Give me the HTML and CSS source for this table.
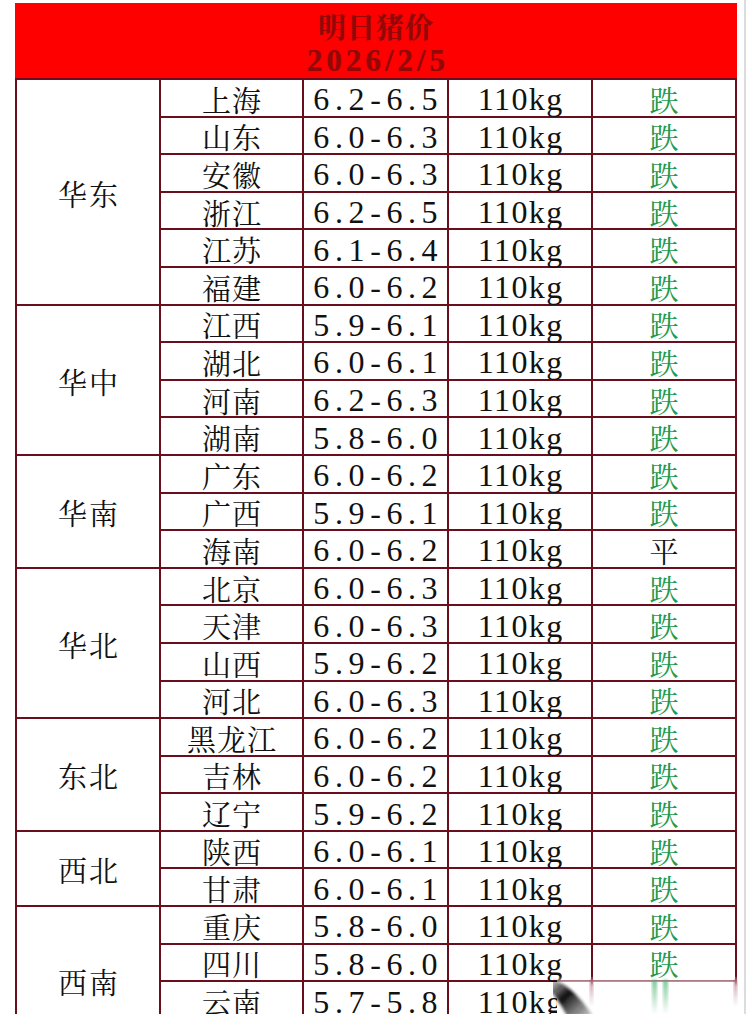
FILE: index.html
```html
<!DOCTYPE html>
<html lang="zh-CN">
<head>
<meta charset="utf-8">
<title>明日猪价</title>
<link rel="stylesheet" href="styles.css">
</head>
<body>
<div class="page">
  <div class="sheet">
    <div class="head">
      <div class="title">明日猪价</div>
      <div class="date">2026/2/5</div>
    </div>
    <div class="grid">
      <div class="region" style="grid-row: span 6">华东</div>
      <div class="prov">上海</div><div class="range">6.2-6.5</div><div class="wt">110kg</div><div class="trend down">跌</div>
      <div class="prov">山东</div><div class="range">6.0-6.3</div><div class="wt">110kg</div><div class="trend down">跌</div>
      <div class="prov">安徽</div><div class="range">6.0-6.3</div><div class="wt">110kg</div><div class="trend down">跌</div>
      <div class="prov">浙江</div><div class="range">6.2-6.5</div><div class="wt">110kg</div><div class="trend down">跌</div>
      <div class="prov">江苏</div><div class="range">6.1-6.4</div><div class="wt">110kg</div><div class="trend down">跌</div>
      <div class="prov">福建</div><div class="range">6.0-6.2</div><div class="wt">110kg</div><div class="trend down">跌</div>

      <div class="region" style="grid-row: span 4">华中</div>
      <div class="prov">江西</div><div class="range">5.9-6.1</div><div class="wt">110kg</div><div class="trend down">跌</div>
      <div class="prov">湖北</div><div class="range">6.0-6.1</div><div class="wt">110kg</div><div class="trend down">跌</div>
      <div class="prov">河南</div><div class="range">6.2-6.3</div><div class="wt">110kg</div><div class="trend down">跌</div>
      <div class="prov">湖南</div><div class="range">5.8-6.0</div><div class="wt">110kg</div><div class="trend down">跌</div>

      <div class="region" style="grid-row: span 3">华南</div>
      <div class="prov">广东</div><div class="range">6.0-6.2</div><div class="wt">110kg</div><div class="trend down">跌</div>
      <div class="prov">广西</div><div class="range">5.9-6.1</div><div class="wt">110kg</div><div class="trend down">跌</div>
      <div class="prov">海南</div><div class="range">6.0-6.2</div><div class="wt">110kg</div><div class="trend flat">平</div>

      <div class="region" style="grid-row: span 4">华北</div>
      <div class="prov">北京</div><div class="range">6.0-6.3</div><div class="wt">110kg</div><div class="trend down">跌</div>
      <div class="prov">天津</div><div class="range">6.0-6.3</div><div class="wt">110kg</div><div class="trend down">跌</div>
      <div class="prov">山西</div><div class="range">5.9-6.2</div><div class="wt">110kg</div><div class="trend down">跌</div>
      <div class="prov">河北</div><div class="range">6.0-6.3</div><div class="wt">110kg</div><div class="trend down">跌</div>

      <div class="region" style="grid-row: span 3">东北</div>
      <div class="prov">黑龙江</div><div class="range">6.0-6.2</div><div class="wt">110kg</div><div class="trend down">跌</div>
      <div class="prov">吉林</div><div class="range">6.0-6.2</div><div class="wt">110kg</div><div class="trend down">跌</div>
      <div class="prov">辽宁</div><div class="range">5.9-6.2</div><div class="wt">110kg</div><div class="trend down">跌</div>

      <div class="region" style="grid-row: span 2">西北</div>
      <div class="prov">陕西</div><div class="range">6.0-6.1</div><div class="wt">110kg</div><div class="trend down">跌</div>
      <div class="prov">甘肃</div><div class="range">6.0-6.1</div><div class="wt">110kg</div><div class="trend down">跌</div>

      <div class="region region-last" style="grid-row: span 3">西南</div>
      <div class="prov">重庆</div><div class="range">5.8-6.0</div><div class="wt">110kg</div><div class="trend down">跌</div>
      <div class="prov">四川</div><div class="range">5.8-6.0</div><div class="wt">110kg</div><div class="trend down">跌</div>
      <div class="prov">云南</div><div class="range">5.7-5.8</div><div class="wt">110kg</div><div class="trend down">跌</div>
    </div>
  </div>
  <svg class="mark" width="200" height="40" viewBox="0 0 200 40">
    <defs>
      <linearGradient id="fadeTop" x1="0" y1="0" x2="0" y2="1">
        <stop offset="0" stop-color="#fff" stop-opacity="0"/>
        <stop offset="0.25" stop-color="#fff" stop-opacity="1"/>
      </linearGradient>
      <linearGradient id="swoosh" x1="0" y1="0" x2="1" y2="1">
        <stop offset="0" stop-color="#000" stop-opacity="0.15"/>
        <stop offset="0.4" stop-color="#111" stop-opacity="1"/>
        <stop offset="1" stop-color="#222" stop-opacity="0.2"/>
      </linearGradient>
      <filter id="soft" x="-20%" y="-20%" width="140%" height="140%">
        <feGaussianBlur stdDeviation="1.5"/>
      </filter>
      <linearGradient id="greenFade" x1="0" y1="0" x2="0" y2="1">
        <stop offset="0" stop-color="#3fae6a" stop-opacity="0.7"/>
        <stop offset="1" stop-color="#3fae6a" stop-opacity="0"/>
      </linearGradient>
      <linearGradient id="pinkFade" x1="0" y1="0" x2="0" y2="1">
        <stop offset="0" stop-color="#8a2040" stop-opacity="0.6"/>
        <stop offset="1" stop-color="#8a2040" stop-opacity="0"/>
      </linearGradient>
    </defs>
    <rect x="4" y="0" width="196" height="40" fill="url(#fadeTop)"/>
    <rect x="37" y="4" width="3" height="26" fill="url(#pinkFade)" filter="url(#soft)"/>
    <rect x="181" y="4" width="3" height="26" fill="url(#pinkFade)" filter="url(#soft)"/>
    <rect x="99" y="4" width="5" height="34" fill="url(#greenFade)" filter="url(#soft)"/>
    <rect x="110" y="4" width="5" height="34" fill="url(#greenFade)" filter="url(#soft)"/>
    <path d="M-2 3 C 10 6, 24 16, 40 40 L 14 40 C 8 28, 2 20, -2 16 Z" fill="url(#swoosh)" filter="url(#soft)"/>
  </svg>
</div>
</body>
</html>
```
FILE: styles.css
```css
html, body {
  margin: 0;
  padding: 0;
  background: #ffffff;
}

.page {
  position: relative;
  width: 746px;
  height: 1014px;
  overflow: hidden;
  border-right: 2px solid #dcdcdc;
  box-sizing: border-box;
  padding-top: 3px;
}

.sheet {
  margin-left: 15px;
  width: 722px;
}

.head {
  height: 75px;
  background: #ff0000;
  display: flex;
  flex-direction: column;
  align-items: center;
  color: #930707;
  font-weight: 700;
}

.title {
  margin-top: 5px;
  height: 36px;
  line-height: 36px;
  font-family: "Noto Serif CJK SC", "Noto Sans CJK SC", sans-serif;
  font-size: 28px;
  font-weight: 700;
  letter-spacing: 1px;
  text-shadow: 0 0 1px #b01010;
}

.date {
  height: 34px;
  line-height: 34px;
  font-family: "Liberation Serif", serif;
  font-size: 31px;
  font-weight: 700;
  letter-spacing: 4px;
  padding-left: 4px;
  text-shadow: 0 0 1px #b01010;
}

.grid {
  display: grid;
  grid-template-columns: 142px 141px 143px 142px 142px;
  grid-auto-rows: 35.6px;
  gap: 2px;
  padding: 2px;
  background: #6a0d1c;
}

.grid > div {
  background: #ffffff;
  display: flex;
  align-items: center;
  justify-content: center;
  color: #111111;
  white-space: nowrap;
  line-height: 1;
  min-width: 0;
  min-height: 0;
}

.region,
.prov,
.trend {
  font-family: "Noto Serif CJK SC", "Noto Sans CJK SC", sans-serif;
  font-size: 29px;
  font-weight: 400;
  padding-top: 3px;
}

.region {
  letter-spacing: 2px;
  padding-left: 2px;
}

.region-last {
  padding-top: 38px;
}

.prov {
  letter-spacing: 1px;
  padding-left: 1px;
}

.range {
  font-family: "Liberation Serif", serif;
  font-size: 32px;
  letter-spacing: 5.6px;
  padding-left: 5.6px;
  padding-top: 3px;
}

.wt {
  font-family: "Liberation Serif", serif;
  font-size: 32px;
  letter-spacing: 1.4px;
  padding-left: 1.4px;
  padding-top: 3px;
}

.trend.down {
  color: #1f9a4c;
}

.trend.flat {
  color: #111111;
}

.mark {
  position: absolute;
  left: 553px;
  top: 976px;
}
```
